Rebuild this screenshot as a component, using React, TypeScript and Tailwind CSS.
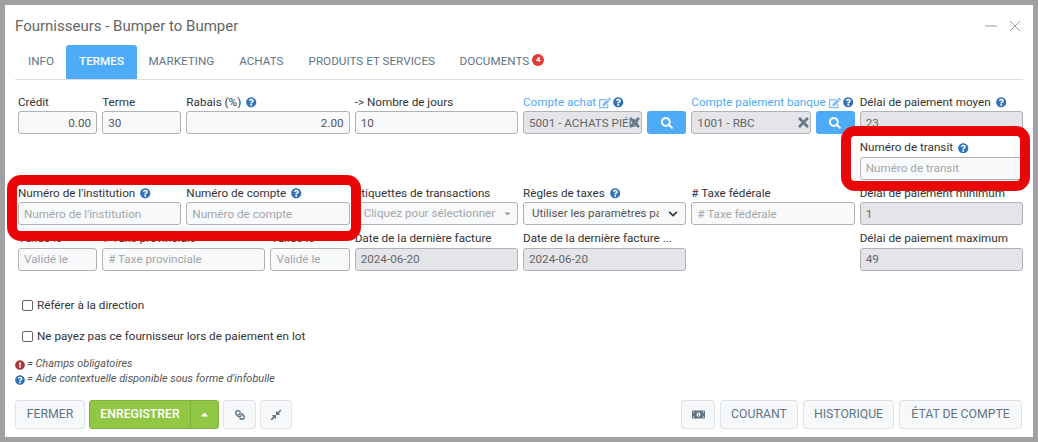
import { ReactNode } from "react";
import {
  FaCaretDown,
  FaCaretUp,
  FaChevronDown,
  FaCompressAlt,
  FaEdit,
  FaExclamationCircle,
  FaLink,
  FaMoneyBillAlt,
  FaQuestionCircle,
  FaSearch,
  FaTimes,
} from "react-icons/fa";

const inputClass =
  "block h-[23px] w-full min-w-0 rounded-[3px] border border-[#b0b3b6] bg-[#f8f9fb] px-[5px] text-[11.7px] text-[#555] placeholder:text-[#a3a6a9] outline-none";
const disabledClass =
  "block h-[23px] w-full min-w-0 rounded-[3px] border border-[#b0b3b6] bg-[#e4e5e9] px-[5px] text-[11.7px] text-[#666] outline-none";
const footerBtn =
  "flex h-[29px] items-center justify-center rounded-[3px] border border-[#dde3e8] bg-[#f6f8fa] text-[12.25px] text-[#5f7486]";

function Help() {
  return <FaQuestionCircle className="ml-[5px] text-[10.5px] text-[#3273b8]" />;
}

function Field({ label, help, className, children }: { label: ReactNode; help?: boolean; className?: string; children: ReactNode }) {
  return (
    <div className={className}>
      <div className="flex h-[20px] items-center whitespace-nowrap pt-[3px] text-[11.7px] text-[#333]">
        {label}
        {help && <Help />}
      </div>
      {children}
    </div>
  );
}

function LinkedAccount({ label, value }: { label: string; value: string }) {
  return (
    <div className="col-span-2">
      <div className="flex h-[20px] items-center whitespace-nowrap pt-[3px] text-[11.7px] text-[#4dabf7]">
        {label}
        <FaEdit className="ml-[3px] text-[12px] text-[#7dbdf5]" />
        <FaQuestionCircle className="ml-[2px] text-[10.5px] text-[#3273b8]" />
      </div>
      <div className="flex gap-[5px]">
        <div className="relative min-w-0 flex-1">
          <input readOnly value={value} className={`${disabledClass} pr-[3px]`} />
          <FaTimes className="absolute right-[0px] top-[4px] text-[15px] text-[#66798a]" />
        </div>
        <button className="flex h-[23px] w-[39px] items-center justify-center rounded-[3px] bg-[#4dabf7] text-white">
          <FaSearch className="text-[12px]" />
        </button>
      </div>
    </div>
  );
}

export default function App() {
  return (
    <div className="relative h-[442px] w-[1038px] overflow-hidden bg-[#a0a0a0] font-['Roboto',sans-serif]">
      <div className="absolute inset-x-[5px] top-[5px] h-[432px] bg-white">
        <div className="flex h-[40px] items-center justify-between pl-[10px] pr-[12px]">
          <h1 className="pt-[3px] text-[15px] text-[#666]">Fournisseurs - Bumper to Bumper</h1>
          <div className="flex items-center gap-[12px] pt-[2px]">
            <svg width="12" height="12" viewBox="0 0 12 12" className="text-[#9a9a9a]">
              <path d="M0 6h12" stroke="currentColor" strokeWidth="1" />
            </svg>
            <svg width="12" height="12" viewBox="0 0 12 12" className="text-[#9a9a9a]">
              <path d="M1 1l10 10M11 1L1 11" stroke="currentColor" strokeWidth="1" />
            </svg>
          </div>
        </div>

        <div className="mx-[10px] flex h-[35px] border-b border-[#ddd] text-[11.7px] uppercase text-[#5f7486]">
          <div className="flex items-center pl-[13px] pr-[12px]">Info</div>
          <div className="flex items-center rounded-t-[3px] bg-[#4dabf7] px-[13px] font-medium text-white">Termes</div>
          <div className="flex items-center pl-[11.5px] pr-[12.5px]">Marketing</div>
          <div className="flex items-center px-[12.5px]">Achats</div>
          <div className="flex items-center px-[12.5px]">Produits et services</div>
          <div className="flex items-center pl-[12px]">
            Documents
            <span className="mb-[4px] ml-[3px] flex h-[12px] w-[12px] items-center justify-center rounded-full bg-[#e03c31] text-[8px] font-bold text-white">
              4
            </span>
          </div>
        </div>

        <div className="grid grid-cols-12 gap-x-[5px] gap-y-[2.5px] pl-[13px] pr-[10px] pt-[11px]">
          <Field label="Crédit">
            <input readOnly value="0.00" className={`${inputClass} text-right`} />
          </Field>
          <Field label="Terme">
            <input readOnly value="30" className={inputClass} />
          </Field>
          <Field label="Rabais (%)" help className="col-span-2">
            <input readOnly value="2.00" className={`${inputClass} text-right`} />
          </Field>
          <Field label="-> Nombre de jours" className="col-span-2">
            <input readOnly value="10" className={inputClass} />
          </Field>
          <LinkedAccount label="Compte achat" value="5001 - ACHATS PIÉCES" />
          <LinkedAccount label="Compte paiement banque" value="1001 - RBC" />
          <Field label="Délai de paiement moyen" help className="col-span-2">
            <input readOnly value="23" className={disabledClass} />
          </Field>

          <Field label="Numéro de transit" help className="col-span-2 col-start-11">
            <input placeholder="Numéro de transit" className={inputClass} />
          </Field>

          <Field label="Numéro de l'institution" help className="col-span-2">
            <input placeholder="Numéro de l'institution" className={inputClass} />
          </Field>
          <Field label="Numéro de compte" help className="col-span-2">
            <input placeholder="Numéro de compte" className={inputClass} />
          </Field>
          <Field label="Étiquettes de transactions" className="col-span-2">
            <div className={`${inputClass} flex items-center justify-between pr-[5px] text-[#a3a6a9]`}>
              <span className="pl-[3px]">Cliquez pour sélectionner</span>
              <FaCaretDown className="text-[9px] text-[#999]" />
            </div>
          </Field>
          <Field label="Règles de taxes" help className="col-span-2">
            <div className={`${inputClass} flex items-center justify-between pl-[8px] pr-[7px]`}>
              <span className="w-[127px] overflow-hidden whitespace-nowrap text-[11.5px]">Utiliser les paramètres par défaut</span>
              <FaChevronDown className="text-[10px] text-[#333]" />
            </div>
          </Field>
          <Field label="# Taxe fédérale" className="col-span-2">
            <input placeholder="# Taxe fédérale" className={inputClass} />
          </Field>
          <Field label="Délai de paiement minimum" className="col-span-2">
            <input readOnly value="1" className={disabledClass} />
          </Field>

          <Field label="Validé le">
            <input placeholder="Validé le" className={inputClass} />
          </Field>
          <Field label="# Taxe provinciale" className="col-span-2">
            <input placeholder="# Taxe provinciale" className={inputClass} />
          </Field>
          <Field label="Validé le">
            <input placeholder="Validé le" className={inputClass} />
          </Field>
          <Field label="Date de la dernière facture" className="col-span-2">
            <input readOnly value="2024-06-20" className={disabledClass} />
          </Field>
          <Field label="Date de la dernière facture ..." className="col-span-2">
            <input readOnly value="2024-06-20" className={disabledClass} />
          </Field>
          <Field label="Délai de paiement maximum" className="col-span-2 col-start-11">
            <input readOnly value="49" className={disabledClass} />
          </Field>
        </div>

        <div className="flex flex-col gap-[19px] pl-[17px] pt-[29px] text-[11.7px] text-[#333]">
          <label className="flex h-[12px] items-center gap-[4px]">
            <span className="h-[11px] w-[11px] rounded-[2px] border border-[#666] bg-white" />
            Référer à la direction
          </label>
          <label className="flex h-[12px] items-center gap-[4px]">
            <span className="h-[11px] w-[11px] rounded-[2px] border border-[#666] bg-white" />
            Ne payez pas ce fournisseur lors de paiement en lot
          </label>
        </div>

        <div className="flex flex-col gap-[3px] pl-[10px] pt-[16px] text-[10.9px] italic text-[#555]">
          <div className="flex h-[12px] items-center gap-[2px]">
            <FaExclamationCircle className="text-[10px] text-[#a83a3a]" />= Champs obligatoires
          </div>
          <div className="flex h-[12px] items-center gap-[2px]">
            <FaQuestionCircle className="text-[10px] text-[#3273b8]" />= Aide contextuelle disponible sous forme d'infobulle
          </div>
        </div>

        <div className="flex justify-between pl-[10px] pr-[11px] pt-[14.5px]">
          <div className="flex gap-[4px]">
            <button className={`${footerBtn} w-[70px]`}>FERMER</button>
            <div className="flex h-[29px] rounded-[3px] border border-[#7fb239] bg-[#92c746] text-[12.25px] font-medium text-white">
              <button className="w-[101px] border-r border-[#7fb239]">ENREGISTRER</button>
              <button className="flex w-[27px] items-center justify-center">
                <FaCaretUp className="text-[11px]" />
              </button>
            </div>
            <button className={`${footerBtn} w-[33px]`}>
              <FaLink className="rotate-90 text-[10px]" />
            </button>
            <button className={`${footerBtn} w-[32px]`}>
              <FaCompressAlt className="text-[12px]" />
            </button>
          </div>
          <div className="flex gap-[5px]">
            <button className={`${footerBtn} w-[34px]`}>
              <FaMoneyBillAlt className="text-[13px]" />
            </button>
            <button className={`${footerBtn} w-[78px]`}>COURANT</button>
            <button className={`${footerBtn} w-[91px]`}>HISTORIQUE</button>
            <button className={`${footerBtn} w-[123px]`}>ÉTAT DE COMPTE</button>
          </div>
        </div>
      </div>

      {/* red annotations drawn over the form */}
      <div className="pointer-events-none absolute left-[7px] top-[175px] h-[66px] w-[354px] rounded-[14px] border-[10px] border-[#ea0606]" />
      <div className="pointer-events-none absolute left-[841px] top-[126px] h-[65px] w-[189px] rounded-[14px] border-[10px] border-[#ea0606]" />
    </div>
  );
}
